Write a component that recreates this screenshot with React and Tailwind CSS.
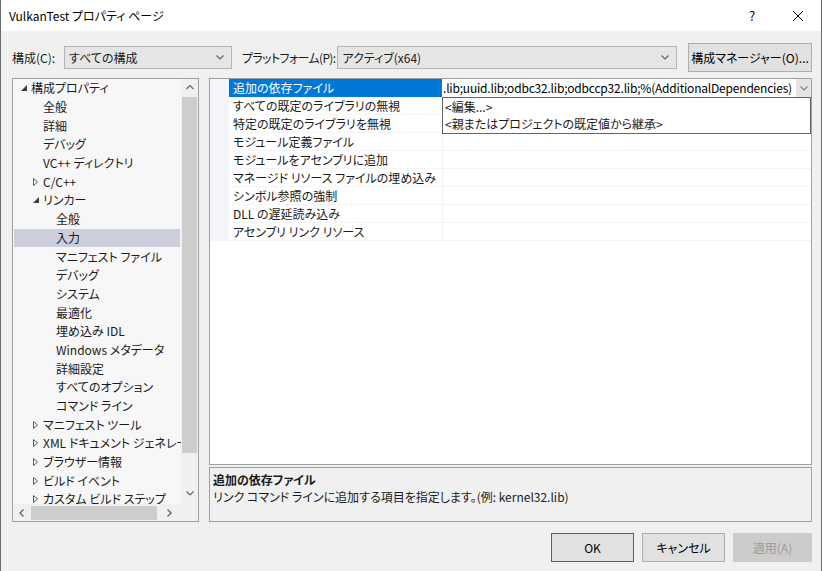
import React from 'react'

const treeItems = [
  { t: '構成プロパティ', l: 0, a: 'open' },
  { t: '全般', l: 1 },
  { t: '詳細', l: 1 },
  { t: 'デバッグ', l: 1 },
  { t: 'VC++ ディレクトリ', l: 1 },
  { t: 'C/C++', l: 1, a: 'closed' },
  { t: 'リンカー', l: 1, a: 'open' },
  { t: '全般', l: 2 },
  { t: '入力', l: 2, sel: true },
  { t: 'マニフェスト ファイル', l: 2 },
  { t: 'デバッグ', l: 2 },
  { t: 'システム', l: 2 },
  { t: '最適化', l: 2 },
  { t: '埋め込み IDL', l: 2 },
  { t: 'Windows メタデータ', l: 2 },
  { t: '詳細設定', l: 2 },
  { t: 'すべてのオプション', l: 2 },
  { t: 'コマンド ライン', l: 2 },
  { t: 'マニフェスト ツール', l: 1, a: 'closed' },
  { t: 'XML ドキュメント ジェネレーター ツール', l: 1, a: 'closed' },
  { t: 'ブラウザー情報', l: 1, a: 'closed' },
  { t: 'ビルド イベント', l: 1, a: 'closed' },
  { t: 'カスタム ビルド ステップ', l: 1, a: 'closed' },
]

const indent = { 0: 'pl-[7px]', 1: 'pl-[19px]', 2: 'pl-[32px]' }

const props = [
  '追加の依存ファイル',
  'すべての既定のライブラリの無視',
  '特定の既定のライブラリを無視',
  'モジュール定義ファイル',
  'モジュールをアセンブリに追加',
  'マネージド リソース ファイルの埋め込み',
  'シンボル参照の強制',
  'DLL の遅延読み込み',
  'アセンブリ リンク リソース',
]

function Chevron({ dir = 'down', color = '#606060' }) {
  if (dir === 'left' || dir === 'right') {
    return (
      <svg width="5" height="8" viewBox="0 0 5 8">
        <path d={dir === 'left' ? 'M4.5 0.5 L1 4 L4.5 7.5' : 'M0.5 0.5 L4 4 L0.5 7.5'} fill="none" stroke={color} strokeWidth="1.3" />
      </svg>
    )
  }
  return (
    <svg width="8" height="5" viewBox="0 0 8 5">
      <path d={dir === 'up' ? 'M0.5 4 L4 0.5 L7.5 4' : 'M0.5 0.5 L4 4 L7.5 0.5'} fill="none" stroke={color} strokeWidth="1.1" />
    </svg>
  )
}

function Arrow({ kind }) {
  if (kind === 'open') {
    return (
      <svg width="6" height="6" viewBox="0 0 6 6">
        <path d="M0 6 L6 6 L6 0 Z" fill="#3c3c3c" />
      </svg>
    )
  }
  if (kind === 'closed') {
    return (
      <svg width="5" height="8" viewBox="0 0 5 8">
        <path d="M0.5 0.5 L4.5 4 L0.5 7.5 Z" fill="none" stroke="#5a5a5a" strokeWidth="1" />
      </svg>
    )
  }
  return null
}

function Select({ value, width }) {
  return (
    <div className={`${width} h-[23px] bg-[#e5e5e5] border border-[#b5b5b5] flex items-center pl-[4px] pr-[7px]`}>
      <span className="flex-1 truncate">{value}</span>
      <Chevron />
    </div>
  )
}

function Button({ children, primary, disabled, width = 'w-[83px]' }) {
  return (
    <div
      className={`${width} shrink-0 whitespace-nowrap h-[29px] flex items-center justify-center border ${
        disabled
          ? 'bg-[#cccccc] border-[#cccccc] text-[#9a9a9a]'
          : primary
          ? 'bg-[#e1e1e1] border-[#0078d7] text-[#000]'
          : 'bg-[#e1e1e1] border-[#adadad] text-[#000]'
      }`}
    >
      {children}
    </div>
  )
}

function Tree() {
  return (
    <div className="w-[187px] shrink-0 h-full border border-[#a0a0a0] grid grid-cols-[168px_17px] grid-rows-[425px_17px]">
      {/* items */}
      <div className="bg-[#f7f7f7] overflow-hidden">
        {treeItems.map((it, i) => (
          <div
            key={i}
            className={`h-[18.7px] flex items-center whitespace-nowrap mx-px ${indent[it.l]} ${it.sel ? 'bg-[#cccedb]' : ''}`}
          >
            <div className="w-[10px] shrink-0 flex items-center">
              <Arrow kind={it.a} />
            </div>
            <span>{it.t}</span>
          </div>
        ))}
      </div>
      {/* vertical scrollbar */}
      <div className="bg-[#f0f0f0] flex flex-col">
        <div className="h-[17px] flex items-center justify-center">
          <Chevron dir="up" />
        </div>
        <div className="mx-[1px] mt-[1px] h-[356px] bg-[#cdcdcd]" />
        <div className="flex-1" />
        <div className="h-[17px] flex items-center justify-center mb-[2px]">
          <Chevron dir="down" />
        </div>
      </div>
      {/* horizontal scrollbar */}
      <div className="bg-[#f0f0f0] flex items-center">
        <div className="w-[17px] flex justify-center">
          <Chevron dir="left" />
        </div>
        <div className="ml-[1px] w-[126px] h-[14px] bg-[#cdcdcd]" />
        <div className="flex-1 flex justify-center">
          <Chevron dir="right" />
        </div>
      </div>
      <div className="bg-[#f0f0f0]" />
    </div>
  )
}

function Grid() {
  return (
    <div className="relative h-[387px] border border-[#a0a0a0] bg-white overflow-hidden">
      {props.map((p, i) => (
        <div key={i} className="flex h-[18px]">
          <div className="w-[19px] shrink-0 bg-[#f3f5f9]" />
          <div
            className={`w-[213px] shrink-0 flex items-center pl-[4px] whitespace-nowrap overflow-hidden ${
              i === 0 ? 'bg-[#0078d7] text-white' : 'border-b border-[#f5f5f5]'
            }`}
          >
            {p}
          </div>
          {i === 0 ? (
            <div className="flex-1 min-w-0 flex">
              <div className="flex-1 min-w-0 bg-white overflow-hidden flex items-center whitespace-nowrap pl-[1px] text-black tracking-[-0.2px]">
                <span className="shrink-0">.lib;uuid.lib;odbc32.lib;odbccp32.lib;%(AdditionalDependencies)</span>
              </div>
              <div className="w-[15px] shrink-0 bg-[#e5e5e5] flex items-center justify-center">
                <Chevron color="#808080" />
              </div>
            </div>
          ) : (
            <div className="flex-1 border-b border-l border-[#f3f3f3]" />
          )}
        </div>
      ))}
      {/* open dropdown list */}
      <div className="absolute left-[232px] top-[18px] w-[369px] h-[37px] bg-white border border-[#646464] border-t-dotted border-r-dotted pl-[2px] flex flex-col">
        <div className="h-[18px] flex items-center">&lt;編集...&gt;</div>
        <div className="h-[18px] flex items-center">&lt;親またはプロジェクトの既定値から継承&gt;</div>
      </div>
    </div>
  )
}

export default function App() {
  return (
    <div className="w-[822px] h-[571px] bg-[#f0f0f0] border-x border-[#6d6d6d] flex flex-col text-[12px] leading-[16px] text-[#1b1b1b] font-['Noto_Sans_CJK_JP',sans-serif] [font-feature-settings:'palt']">
      {/* Title bar */}
      <div className="h-[31px] bg-white flex items-center pl-[8px] text-black">
        <span>VulkanTest プロパティ ページ</span>
        <div className="ml-auto flex">
          <div className="w-[46px] h-[31px] flex items-center justify-center text-[13px]">?</div>
          <div className="w-[46px] h-[31px] flex items-center justify-center">
            <svg width="10" height="10" viewBox="0 0 10 10">
              <path d="M0 0 L10 10 M10 0 L0 10" stroke="#000" strokeWidth="1" />
            </svg>
          </div>
        </div>
      </div>

      {/* Configuration row */}
      <div className="mt-[12px] h-[29px] flex items-center pl-[11px] whitespace-nowrap">
        <span className="w-[52px] shrink-0">構成(C):</span>
        <Select value="すべての構成" width="w-[168px] shrink-0" />
        <span className="ml-[10px] mr-[2px] shrink-0 tracking-[-0.65px]">プラットフォーム(P):</span>
        <Select value="アクティブ(x64)" width="flex-1 min-w-0" />
        <div className="ml-[11px] mr-[9px]">
          <Button width="w-[124px]">構成マネージャー(O)...</Button>
        </div>
      </div>

      {/* Panels */}
      <div className="mt-[6px] h-[444px] flex pl-[11px]">
        <Tree />
        <div className="ml-[10px] w-[603px] shrink-0 flex flex-col gap-[2px]">
          <Grid />
          <div className="h-[55px] border border-[#a0a0a0] bg-[#f0f0f0] pl-[3px] pt-[3px] leading-[17px]">
            <div className="font-bold">追加の依存ファイル</div>
            <div>リンク コマンド ラインに追加する項目を指定します。(例: kernel32.lib)</div>
          </div>
        </div>
      </div>

      {/* Buttons */}
      <div className="mt-[11px] flex justify-end gap-[8px] pr-[9px]">
        <Button primary>OK</Button>
        <Button>キャンセル</Button>
        <Button disabled width="w-[79px]">適用(A)</Button>
      </div>
    </div>
  )
}
